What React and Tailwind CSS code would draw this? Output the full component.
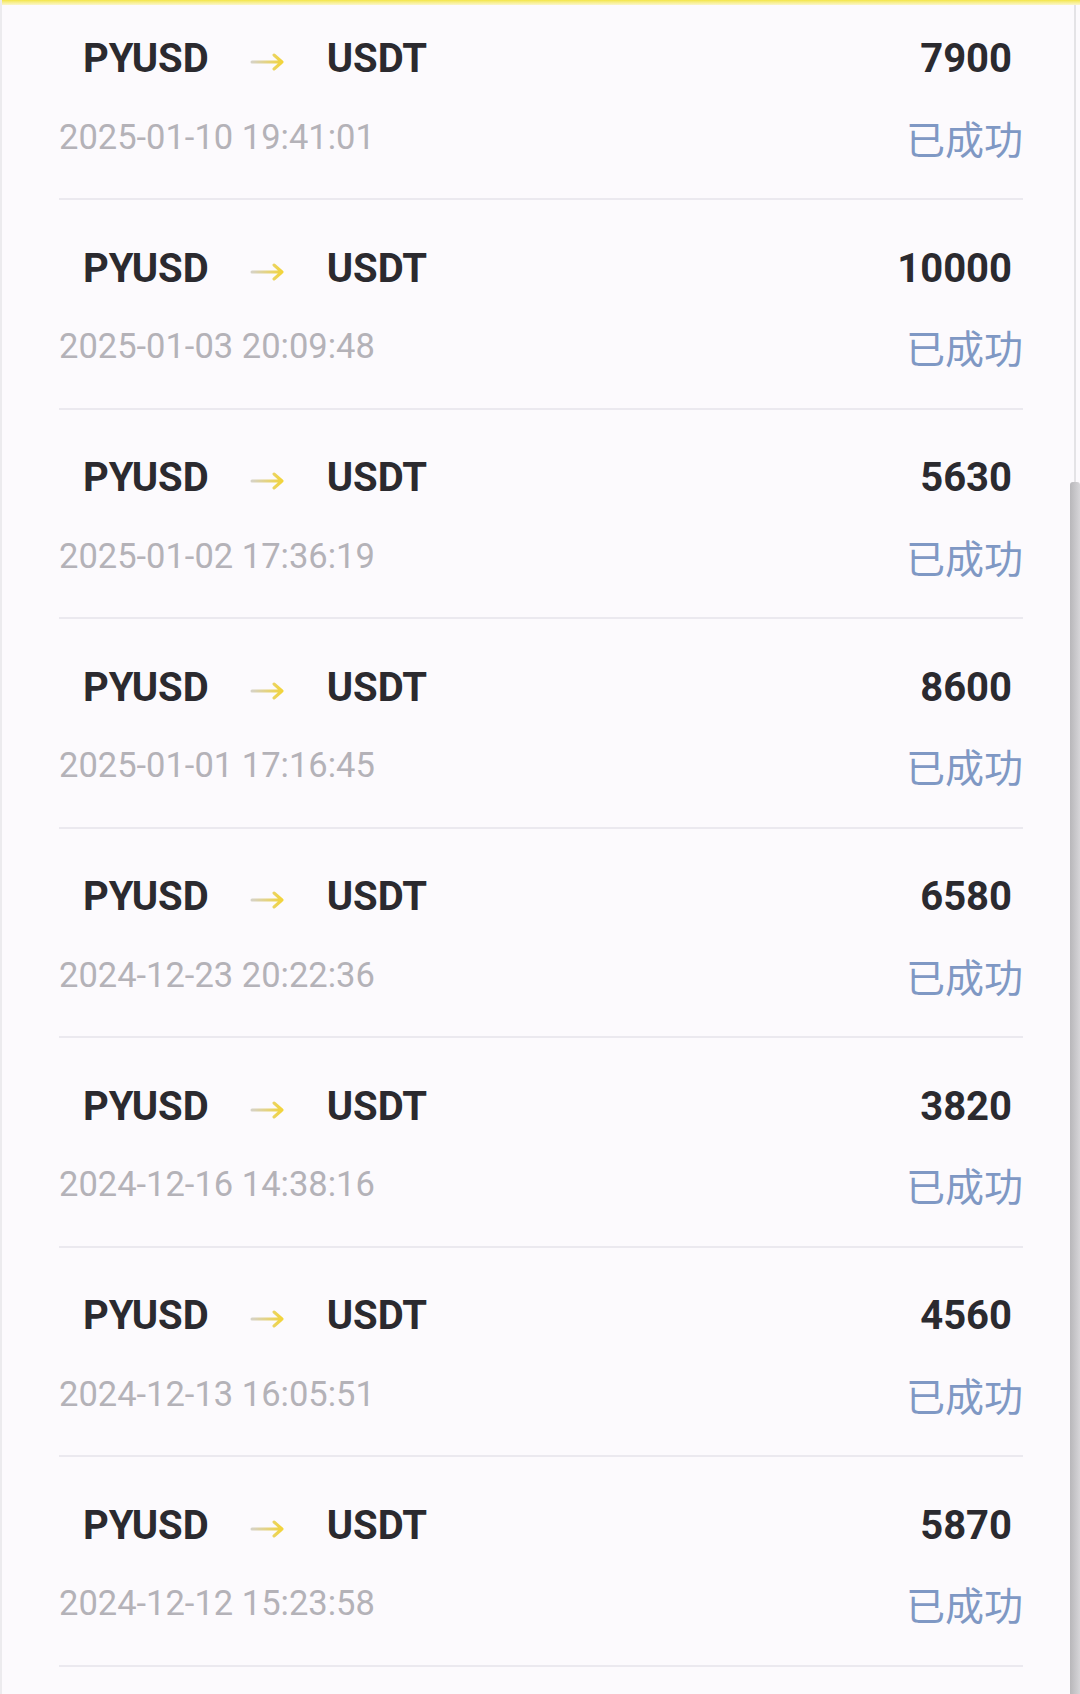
import React from 'react';

const records = [
    { amount: '7900', time: '2025-01-10 19:41:01' },
    { amount: '10000', time: '2025-01-03 20:09:48' },
    { amount: '5630', time: '2025-01-02 17:36:19' },
    { amount: '8600', time: '2025-01-01 17:16:45' },
    { amount: '6580', time: '2024-12-23 20:22:36' },
    { amount: '3820', time: '2024-12-16 14:38:16' },
    { amount: '4560', time: '2024-12-13 16:05:51' },
    { amount: '5870', time: '2024-12-12 15:23:58' },
];

// small gray-to-yellow arrow between the two coins
const Arrow = () => (
    <svg width="36" height="20" viewBox="0 0 36 20" className="mt-[6px]">
        <defs>
            <linearGradient id="arrowGrad" x1="0" x2="1" y1="0" y2="0">
                <stop offset="0" stopColor="#d6d2c6" />
                <stop offset="1" stopColor="#f2d43a" />
            </linearGradient>
        </defs>
        <path d="M2 10 H32 M24 3 L32 10 L24 17" fill="none" stroke="url(#arrowGrad)" strokeWidth="3" strokeLinecap="round" strokeLinejoin="round" />
    </svg>
);

const Row = ({ item }) => (
    <div className="ml-[57px] mr-[55px] h-[209.5px] pt-[48.5px] border-b-2 border-[#ebe9ef]">
        <div className="flex items-center justify-between h-[40px]">
            <div className="flex items-center gap-[41px] pl-[24px] text-[40px] font-bold text-[#2b2a2f] leading-none">
                <span>PYUSD</span>
                <Arrow />
                <span>USDT</span>
            </div>
            <span className="pr-[11px] text-[40px] font-bold text-[#2b2a2f] leading-none">{item.amount}</span>
        </div>
        <div className="flex items-center justify-between h-[40px] mt-[38px]">
            <span className="text-[34.5px] text-[#b4b2b8] leading-none">{item.time}</span>
            <span className="text-[39px] text-[#7f98c4] leading-none" style={{ fontFamily: '"Noto Sans CJK SC", sans-serif' }}>已成功</span>
        </div>
    </div>
);

export default function App() {
    return (
        <div className="relative w-[1080px] h-[1694px] overflow-hidden bg-[#fcfafd] border-l-2 border-[#ecebee]" style={{ fontFamily: 'Roboto, "Noto Sans CJK SC", sans-serif' }}>
            {/* yellow header edge */}
            <div className="absolute top-0 left-0 right-0 h-[5px] bg-gradient-to-b from-[#f4e640] to-[#fbf6c8] z-10" />

            {/* scroll track + thumb */}
            <div className="absolute top-0 right-[4px] w-[2px] h-[482px] bg-[#e4e3e6]" />
            <div className="absolute top-[482px] right-0 w-[10px] bottom-0 bg-gradient-to-r from-[#b8b7ba] to-[#d6d5d8] rounded-t-[3px]" />

            <div className="-mt-[9.5px] pr-[2px]">
                {records.map((item, i) => (
                    <Row key={i} item={item} />
                ))}
            </div>
        </div>
    );
}
